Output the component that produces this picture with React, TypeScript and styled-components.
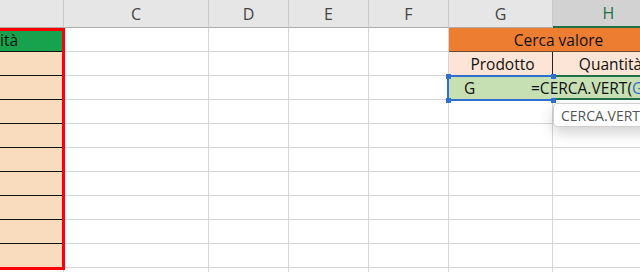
import styled, { createGlobalStyle } from 'styled-components';

const GlobalStyle = createGlobalStyle`
  html, body {
    margin: 0;
    padding: 0;
    background: #fff;
    overflow: hidden;
  }
  body {
    font-family: "Open Sans", "Liberation Sans", Arial, sans-serif;
  }
`;

const Viewport = styled.div`
  width: 640px;
  height: 272px;
  overflow: hidden;
  background: #fff;
`;

// sheet is scrolled horizontally: column B is only partly visible
const Sheet = styled.div`
  display: grid;
  grid-template-columns: 158px 145px 80px 80px 80px 104px 112px 80px;
  grid-template-rows: 28px repeat(11, 24px);
  width: max-content;
  margin-left: -94px;
`;

const ColHead = styled.div<{ $col: number; $active?: boolean }>`
  grid-column: ${(p) => p.$col};
  grid-row: 1;
  box-sizing: border-box;
  display: flex;
  align-items: flex-end;
  justify-content: center;
  padding-bottom: 2px;
  background: ${(p) => (p.$active ? '#d2d2d2' : '#e6e6e6')};
  color: ${(p) => (p.$active ? '#1e7145' : '#444')};
  border-right: 1px solid #c9c9c9;
  border-bottom: ${(p) => (p.$active ? '2px solid #1e7145' : '1px solid #ababab')};
  font-size: 16px;
`;

const Cell = styled.div<{
  $col: number;
  $row: number;
  $span?: number;
  $bg?: string;
  $bottom?: string;
  $right?: string;
  $align?: string;
  $pad?: number;
}>`
  grid-column: ${(p) => p.$col} / span ${(p) => p.$span ?? 1};
  grid-row: ${(p) => p.$row + 1};
  box-sizing: border-box;
  min-width: 0;
  display: flex;
  align-items: center;
  justify-content: ${(p) => p.$align ?? 'flex-start'};
  padding: 0 0 0 ${(p) => p.$pad ?? 4}px;
  background: ${(p) => p.$bg ?? '#fff'};
  border-right: 1px solid ${(p) => p.$right ?? '#d6d6d6'};
  border-bottom: 1px solid ${(p) => p.$bottom ?? '#d6d6d6'};
  color: #111;
  font-size: 15.5px;
  white-space: nowrap;
  overflow: hidden;
`;

const EditCell = styled(Cell)`
  position: relative;
  z-index: 1;
  overflow: visible;
  padding: 0;
  border-top: 2px solid #1e7145;
  border-bottom: 2px solid #1e7145;
  border-right: none;
  margin-top: -1px;
`;

const Formula = styled.span`
  margin-left: -22px;
  padding-top: 1px;
`;

const Ref = styled.span`
  color: #2f6fcf;
`;

const RangeOutline = styled.div`
  grid-column: 1;
  grid-row: 2 / 12;
  z-index: 2;
  border: 3px solid #ff0000;
  margin: 0 -1px -2px 0;
  pointer-events: none;
`;

const Selection = styled.div`
  grid-column: 6;
  grid-row: 4;
  position: relative;
  z-index: 2;
  border: 2px solid #2f6fcf;
  border-right: none;
  margin: -1px 0 -1px -2px;
  pointer-events: none;
`;

const Handle = styled.span<{ $x: 'l' | 'r'; $y: 't' | 'b' }>`
  position: absolute;
  width: 5px;
  height: 5px;
  background: #2f6fcf;
  ${(p) => (p.$x === 'l' ? 'left: -3.5px;' : 'right: -3px;')}
  ${(p) => (p.$y === 't' ? 'top: -3.5px;' : 'bottom: -3.5px;')}
`;

const Tooltip = styled.div`
  grid-column: 7 / span 2;
  grid-row: 5;
  z-index: 3;
  align-self: start;
  justify-self: start;
  box-sizing: border-box;
  height: 24px;
  margin-top: 3px;
  display: flex;
  align-items: center;
  padding: 0 10px 0 7px;
  background: #fff;
  border: 1px solid #cfcfcf;
  border-radius: 4px;
  box-shadow: 0 6px 14px rgba(0, 0, 0, 0.18);
  color: #555;
  font-size: 14px;
  white-space: nowrap;
`;

const Arg = styled.b`
  font-weight: 700;
`;

const letters = ['B', 'C', 'D', 'E', 'F', 'G', 'H', 'I'];
const peach = '#f8dcbd';

export default function App() {
  const cells = [];
  for (let r = 1; r <= 11; r++) {
    // column B: the table range
    if (r === 1) {
      cells.push(
        <Cell key="b1" $col={1} $row={r} $bg="#17a34d" $bottom="#111" $align="center">
          Quantità
        </Cell>
      );
    } else if (r <= 10) {
      cells.push(<Cell key={'b' + r} $col={1} $row={r} $bg={peach} $bottom="#111" />);
    } else {
      cells.push(<Cell key={'b' + r} $col={1} $row={r} />);
    }
    for (let c = 2; c <= 5; c++) {
      cells.push(<Cell key={r + '-' + c} $col={c} $row={r} />);
    }
    if (r === 1) {
      cells.push(
        <Cell key="g1" $col={6} $row={r} $span={2} $bg="#ed7d31" $bottom="#6b4a35" $align="center">
          Cerca valore
        </Cell>
      );
    } else if (r === 2) {
      cells.push(
        <Cell key="g2" $col={6} $row={r} $bg="#fce4d6" $right="#222" $align="center">
          Prodotto
        </Cell>,
        <Cell key="h2" $col={7} $row={r} $bg="#fce4d6" $align="center">
          Quantità
        </Cell>
      );
    } else if (r === 3) {
      cells.push(
        <Cell key="g3" $col={6} $row={r} $bg="#c6e0b4" $pad={15}>
          G
        </Cell>,
        <EditCell key="h3" $col={7} $row={r} $bg="#c6e0b4">
          <Formula>
            =CERCA.VERT(<Ref>G</Ref>
          </Formula>
        </EditCell>
      );
    } else {
      cells.push(<Cell key={'g' + r} $col={6} $row={r} />, <Cell key={'h' + r} $col={7} $row={r} />);
    }
    cells.push(<Cell key={'i' + r} $col={8} $row={r} />);
  }

  return (
    <>
      <GlobalStyle />
      <Viewport>
        <Sheet>
          {letters.map((l, i) => (
            <ColHead key={l} $col={i + 1} $active={l === 'H'}>
              {l}
            </ColHead>
          ))}
          {cells}
          <RangeOutline />
          <Selection>
            <Handle $x="l" $y="t" />
            <Handle $x="r" $y="t" />
            <Handle $x="l" $y="b" />
            <Handle $x="r" $y="b" />
          </Selection>
          <Tooltip>
            CERCA.VERT(<Arg>valore</Arg>; matrice_tabella; indice; [intervallo])
          </Tooltip>
        </Sheet>
      </Viewport>
    </>
  );
}
